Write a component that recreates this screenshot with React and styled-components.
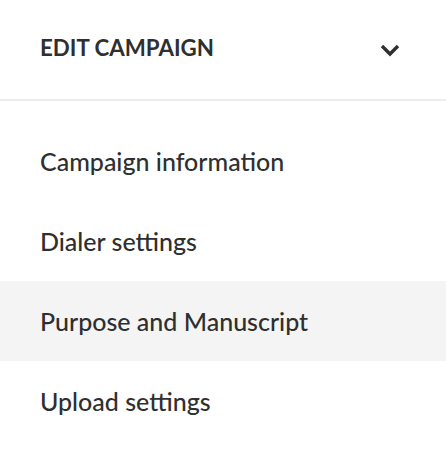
import React from "react";
import styled, { createGlobalStyle } from "styled-components";

const Global = createGlobalStyle`
  html, body { margin: 0; padding: 0; background: #fff; }
  body { font-family: Lato, "Open Sans", sans-serif; color: #2f2f2f; }
`;

const Panel = styled.nav`
  width: 446px;
  display: flex;
  flex-direction: column;
`;

const Header = styled.div`
  height: 101px;
  display: flex;
  align-items: center;
  justify-content: space-between;
  padding: 0 44px 4px 40px;
  box-sizing: border-box;
  border-bottom: 2px solid #ececec;
`;

const Title = styled.h2`
  margin: 0;
  font-size: 22.3px;
  font-weight: 700;
  color: #2f2f2f;
`;

const Toggle = styled.button`
  border: 0;
  background: none;
  padding: 0;
  width: 24px;
  height: 24px;
  display: flex;
  align-items: center;
  justify-content: center;
  margin-top: 4px;
`;

const List = styled.ul`
  list-style: none;
  margin: 0;
  padding: 20px 0 0 0;
`;

const Item = styled.li`
  height: 80px;
  display: flex;
  align-items: center;
  padding: 0 40px;
  font-size: 25px;
  font-weight: 500;
  color: #2f2f2f;
  background: ${(p) => (p.$active ? "#f4f4f4" : "transparent")};
`;

const items = [
  "Campaign information",
  "Dialer settings",
  "Purpose and Manuscript",
  "Upload settings",
];

export default function App() {
  return (
    <>
      <Global />
      <Panel>
        <Header>
          <Title>EDIT CAMPAIGN</Title>
          <Toggle aria-label="collapse">
            <svg width="22" height="14" viewBox="0 0 22 14">
              <path d="M3 3 L11 11 L19 3" fill="none" stroke="#2f2f2f" strokeWidth="3.4" />
            </svg>
          </Toggle>
        </Header>
        <List>
          {items.map((t, i) => (
            <Item key={t} $active={i === 2}>
              {t}
            </Item>
          ))}
        </List>
      </Panel>
    </>
  );
}
